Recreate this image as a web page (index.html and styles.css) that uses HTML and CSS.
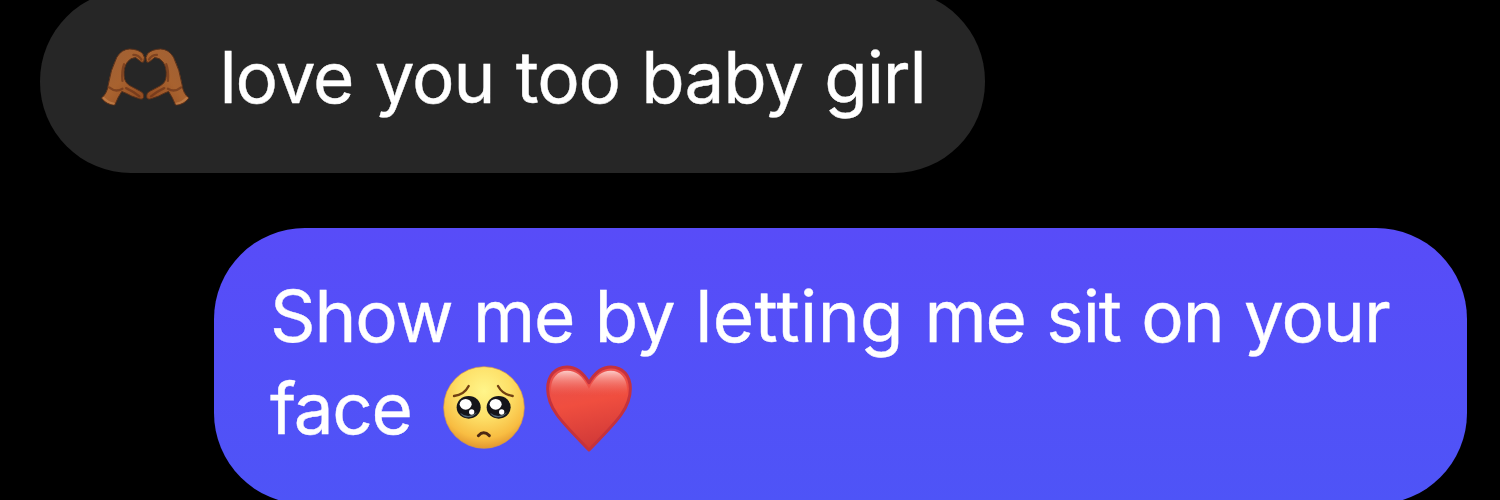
FILE: index.html
```html
<!DOCTYPE html>
<html lang="en">
<head>
    <meta charset="UTF-8">
    <meta name="viewport" content="width=device-width, initial-scale=1.0">
    <title>Messages</title>
    <link rel="stylesheet" href="styles.css">
</head>
<body>
    <div class="chat">
        <div class="bubble received">
            <div class="line">
                <svg class="emoji hands" viewBox="30 30 270 190">
                    <defs>
                        <linearGradient id="skin" x1="0" y1="0" x2="1" y2="1">
                            <stop offset="0" stop-color="#9c6038"/>
                            <stop offset="0.5" stop-color="#a8622f"/>
                            <stop offset="1" stop-color="#8e481f"/>
                        </linearGradient>
                        <filter id="soft">
                            <feGaussianBlur stdDeviation="2"/>
                        </filter>
                        <g id="hand">
                            <path fill="url(#skin)" stroke="#5a3019" stroke-width="3" stroke-linejoin="round" d="M34 190 Q51 176 54 151 Q61 105 80 67 Q94 43 119 42 Q145 43 158 56 Q167 67 161 81 Q155 85 147 76 L137 68 Q122 68 112 81 Q100 97 102 123 Q103 144 120 153 L150 169 Q162 174 161 187 Q159 196 148 192 L125 184 Q109 175 95 170 Q83 187 74 211 Q48 211 34 190 Z"/>
                            <path class="crease" filter="url(#soft)" d="M130 60 Q146 60 154 74 M57 158 Q76 174 97 162 M108 160 Q132 171 148 185 M102 88 Q94 108 97 138"/>
                            <path class="wrist" filter="url(#soft)" d="M40 190 Q55 205 70 207"/>
                        </g>
                    </defs>
                    <use href="#hand"/>
                    <use href="#hand" transform="translate(331 0) scale(-1 1)"/>
                </svg>
                <span class="love">love you too baby girl</span>
            </div>
        </div>

        <div class="bubble sent">
            <div class="line"><span class="show">Show me by <span class="letting">letting</span> me sit on your</span></div>
            <div class="line">
                <span class="face-word">face</span>
                <svg class="emoji pleading" viewBox="39 33 246 249">
                    <defs>
                        <radialGradient id="yellow" cx="0.5" cy="0.3" r="0.72">
                            <stop offset="0" stop-color="#fff58a"/>
                            <stop offset="0.45" stop-color="#fde068"/>
                            <stop offset="0.8" stop-color="#f8bd42"/>
                            <stop offset="1" stop-color="#df912d"/>
                        </radialGradient>
                        <g id="eye">
                            <ellipse cx="116" cy="157" rx="36" ry="34" fill="#15151a"/>
                            <path d="M90 173 Q115 193 142 172 Q131 187 115 187 Q99 187 90 173Z" fill="#536775"/>
                            <ellipse cx="107" cy="148" rx="18" ry="16" fill="#fff"/>
                            <circle cx="125" cy="171" r="8" fill="#fff"/>
                        </g>
                    </defs>
                    <ellipse cx="162" cy="157.500" rx="121" ry="122.500" fill="url(#yellow)" stroke="#d99a45" stroke-width="2"/>
                    <use href="#eye"/>
                    <use href="#eye" x="90"/>
                    <path class="brow" d="M72 123 Q103 119 116 93 M204 93 Q218 119 248 123"/>
                    <path class="mouth" d="M145 242 Q161 225 178 242"/>
                </svg>
                <svg class="emoji heart" viewBox="348 30 258 261">
                    <defs>
                        <linearGradient id="red" x1="0" y1="0" x2="0.2" y2="1">
                            <stop offset="0" stop-color="#e75050"/>
                            <stop offset="0.5" stop-color="#f04e3f"/>
                            <stop offset="1" stop-color="#d23a38"/>
                        </linearGradient>
                        <linearGradient id="shine" x1="0" y1="0" x2="0" y2="1">
                            <stop offset="0" stop-color="#ffd8d4" stop-opacity="0.9"/>
                            <stop offset="0.14" stop-color="#f9a097" stop-opacity="0.6"/>
                            <stop offset="0.34" stop-color="#f26b5d" stop-opacity="0"/>
                        </linearGradient>
                    </defs>
                    <path fill="url(#red)" stroke="#c5323d" stroke-width="9" stroke-linejoin="round" d="M477 83 C458 50 437 36 411 36 C375 36 353 63 353 101 C353 164 402 207 477 285 C552 207 601 164 601 101 C601 63 579 36 543 36 C517 36 496 50 477 83 Z"/>
                    <path fill="url(#shine)" d="M477 102 C458 61 437 47 412 47 C383 47 364 68 363 101 C363 150 410 195 477 265 C544 195 591 150 591 101 C590 68 571 47 542 47 C517 47 496 61 477 102 Z"/>
                </svg>
            </div>
        </div>
    </div>
</body>
</html>
```

FILE: styles.css
```css
body {
    margin: 0;
    height: 500px;
    background: #000;
    overflow: hidden;
    font-family: Inter, "Liberation Sans", sans-serif;
    font-size: 71px;
    line-height: 92px;
    letter-spacing: -1.1px;
    color: #fff;
    -webkit-text-stroke: 0.4px #fff;
}
.chat {
    box-sizing: border-box;
    display: flex;
    flex-direction: column;
    justify-content: flex-end;
    gap: 55px;
    height: 504px;
    padding: 0 33px 0 40px;
}
.bubble {
    box-sizing: border-box;
    flex-shrink: 0;
    border-radius: 91px;
}
.received {
    align-self: flex-start;
    width: 945px;
    height: 183px;
    padding: 41px 57px 0 60px;
    background: #262626;
}
.sent {
    align-self: flex-end;
    width: 1253px;
    height: 276px;
    padding: 42px 57px 0 56px;
    background: linear-gradient(#584cf8, #4e54f7);
}
.line {
    display: flex;
    align-items: flex-start;
    height: 91.5px;
    white-space: nowrap;
}
.emoji {
    display: block;
    flex-shrink: 0;
    overflow: visible;
}
.hands {
    width: 90px;
    height: 63px;
    margin: 14px 29.5px 0 0;
}
.pleading {
    width: 82px;
    height: 83px;
    margin: 4px 21px 0 0;
}
.heart {
    width: 86px;
    height: 87px;
    margin-top: 3px;
}
.love {
    word-spacing: 2.4px;
}
.show {
    word-spacing: 1.6px;
}
.letting {
    letter-spacing: 0.4px;
}
.face-word {
    width: 173px;
    letter-spacing: -1.4px;
}
.crease {
    fill: none;
    stroke: #5f2c14;
    stroke-width: 7;
    stroke-linecap: round;
    opacity: 0.55;
}
.wrist {
    fill: none;
    stroke: #c5834e;
    stroke-width: 7;
    stroke-linecap: round;
    opacity: 0.7;
}
.brow {
    fill: none;
    stroke: #713f12;
    stroke-width: 7;
    stroke-linecap: round;
}
.mouth {
    fill: none;
    stroke: #4b2713;
    stroke-width: 9;
    stroke-linecap: round;
}
```
